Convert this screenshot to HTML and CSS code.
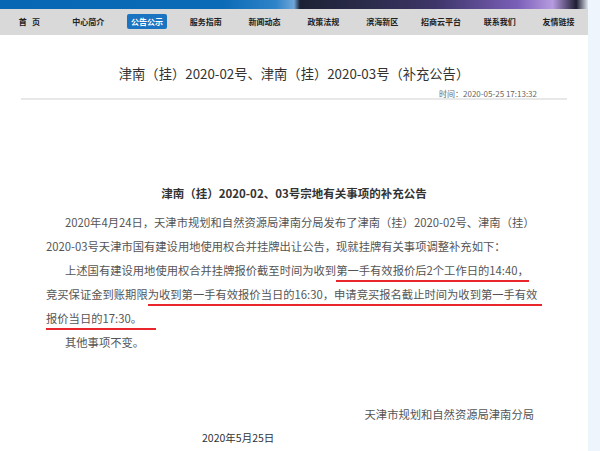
FILE: index.html
```html
<!DOCTYPE html>
<html lang="zh-CN">
<head>
    <meta charset="UTF-8">
    <meta name="viewport" content="width=device-width, initial-scale=1.0">
    <title>津南（挂）2020-02号、津南（挂）2020-03号（补充公告）</title>
    <link rel="stylesheet" href="styles.css">
</head>
<body>

<div class="page">
    <div class="banner"></div> <!-- bottom strip of the header picture -->

    <nav class="menu">
        <a href="#">首&nbsp;&nbsp;&nbsp;页</a>
        <a href="#">中心简介</a>
        <a href="#"><span class="active">公告公示</span></a>
        <a href="#">服务指南</a>
        <a href="#">新闻动态</a>
        <a href="#">政策法规</a>
        <a href="#">滨海新区</a>
        <a href="#">招商云平台</a>
        <a href="#">联系我们</a>
        <a href="#">友情链接</a>
    </nav>

    <main class="content">
        <h1 class="title">津南（挂）2020-02号、津南（挂）2020-03号（补充公告）</h1>
        <div class="meta">时间：2020-05-25 17:13:32</div>

        <div class="article">
            <h2>津南（挂）2020-02、03号宗地有关事项的补充公告</h2>
            <p class="indent">2020年4月24日，天津市规划和自然资源局津南分局发布了津南（挂）2020-02号、津南（挂）<br>2020-03号天津市国有建设用地使用权合并挂牌出让公告，现就挂牌有关事项调整补充如下：</p>
            <p class="indent">上述国有建设用地使用权合并挂牌报价截至时间为收到<span class="mark">第一手有效报价后2个工作日的14:40，</span><br>竞买保证金到账期限<span class="mark long">为收到第一手有效报价当日的16:30，申请竞买报名截止时间为收到第一手有效</span><br><span class="mark short">报价当日的17:30。</span></p>
            <p class="indent">其他事项不变。</p>

            <p class="sign">天津市规划和自然资源局津南分局</p>
            <p class="date">2020年5月25日</p>
        </div>
    </main>
</div>

</body>
</html>
```

FILE: styles.css
```css
body {
    margin: 0;
    background-color: #eef5fc; /* pale blue page background on the right */
    font-family: "Noto Sans CJK SC", "Liberation Sans", sans-serif;
    color: #333333;
}

.page {
    width: 588px;
    min-height: 451px;
    background-color: #ffffff;
}

.banner {
    height: 9px;
    background: linear-gradient(to right, #0867b4 0%, #0c6bb7 38%, #2f84c8 47%, #6fa6d8 50%, #1c2236 51%, #2b2c4a 62%, #3d3568 74%, #7a5fb8 88%, #b79be0 94%, #1f1d33 98%, #dfe6f0 100%);
}

.menu {
    display: flex;
    height: 26px;
    background-color: #d9d9d9;
}

.menu a {
    flex: 1;
    text-align: center;
    line-height: 26px;
    font-size: 8px;
    font-weight: bold;
    color: #222222;
    text-decoration: none;
    white-space: nowrap;
}

.menu .active {
    display: inline-block;
    padding: 0 4px;
    line-height: 15px;
    background-color: #1b74c1;
    color: #ffffff;
    border-radius: 2px;
}

.content {
    padding: 0 21px;
}

.title {
    margin: 0;
    padding-top: 29px;
    font-size: 13.3px;
    font-weight: normal;
    line-height: 20px;
    text-align: center;
    color: #333333;
}

.meta {
    margin-top: 6px;
    padding-right: 30px;
    line-height: 8px;
    font-size: 8px;
    text-align: right;
    color: #666666;
    border-bottom: 2px solid #e8e8e8;
}

.article {
    padding: 0 25px;
}

.article h2 {
    margin: 83px 0 7px;
    font-size: 11.5px;
    font-weight: bold;
    line-height: 20px;
    text-align: center;
    color: #333333;
}

.article p {
    margin: 0;
    font-size: 11.3px;
    line-height: 24px;
    color: #555555;
    white-space: nowrap;
}

.indent {
    text-indent: 19px;
}

.mark {
    padding-bottom: 2px;
    border-bottom: 2px solid #e8262b; /* red marker line under the changed dates */
}

.mark.long {
    padding-right: 5px;
}

.mark.short {
    padding-right: 14px;
}

.article .sign {
    margin-top: 48px;
    padding-right: 8px;
    text-align: right;
}

.article .date {
    padding-left: 156px;
    font-size: 10.5px;
    color: #333333;
}
```
